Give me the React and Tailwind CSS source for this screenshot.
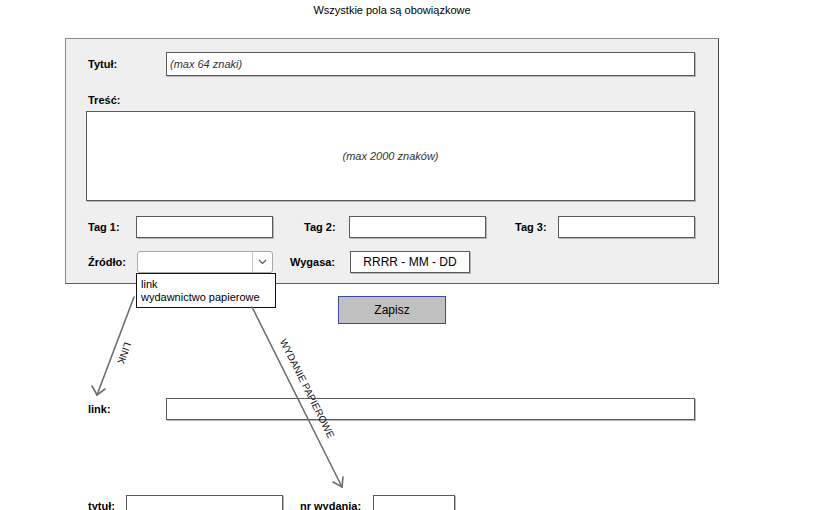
import React from 'react';

const inputCls = "h-[22px] bg-white border border-[#5a5a5a] shadow-[1px_1px_0_#b5b5b5]";

const Label = ({ children, w }) => (
  <span className={`font-bold text-[11px] text-black shrink-0 ${w}`}>{children}</span>
);

const Arrows = () => (
  <svg className="absolute inset-0 pointer-events-none" width="825" height="510" viewBox="0 0 825 510">
    <g stroke="#6e6e6e" strokeWidth="1.6" fill="none" strokeLinecap="round">
      <line x1="134" y1="297" x2="97" y2="395" />
      <polyline points="92,386 97,395 105,389" />
      <line x1="252" y1="307" x2="342" y2="487" />
      <polyline points="333,482 342,487 343,477" />
    </g>
    <text
      x="0"
      y="0"
      transform="translate(121 352) rotate(110)"
      textAnchor="middle"
      fontSize="10"
      fontFamily="'Liberation Sans', Arial, sans-serif"
      fill="#111"
    >
      LINK
    </text>
    <text
      x="0"
      y="0"
      transform="translate(304 390) rotate(63.4)"
      textAnchor="middle"
      fontSize="10"
      fontFamily="'Liberation Sans', Arial, sans-serif"
      fill="#111"
    >
      WYDANIE PAPIEROWE
    </text>
  </svg>
);

export default function App() {
  return (
    <div className="relative w-[825px] h-[510px] overflow-hidden bg-white text-black font-['Liberation_Sans',Arial,sans-serif] text-[11px]">
      <div className="ml-[65px] w-[654px] pt-[4px] h-[17px] leading-[13px] text-center">
        Wszystkie pola są obowiązkowe
      </div>

      {/* main form panel */}
      <div className="ml-[65px] mt-[21px] w-[654px] h-[246px] bg-[#efefef] border border-[#8a8a8a] border-r-[#444] border-b-[#5a5a5a]">
        <div className="flex items-center mt-[13px] pl-[22px] h-[24px]">
          <Label w="w-[78px]">Tytuł:</Label>
          <div className={`${inputCls} h-[24px] w-[529px] flex items-center pl-[3px] italic text-[#333]`}>
            (max 64 znaki)
          </div>
        </div>

        <div className="mt-[18px] pl-[22px] h-[13px] leading-[13px]">
          <Label w="">Treść:</Label>
        </div>

        <div className={`${inputCls} ml-[20px] mt-[4px] w-[609px] h-[90px] flex items-center justify-center italic text-[#333]`}>
          (max 2000 znaków)
        </div>

        <div className="flex items-center mt-[15px] pl-[22px] h-[22px]">
          <Label w="w-[48px]">Tag 1:</Label>
          <div className={`${inputCls} w-[137px]`} />
          <div className="w-[31px]" />
          <Label w="w-[45px]">Tag 2:</Label>
          <div className={`${inputCls} w-[137px]`} />
          <div className="w-[29px]" />
          <Label w="w-[43px]">Tag 3:</Label>
          <div className={`${inputCls} w-[137px]`} />
        </div>

        <div className="flex items-center mt-[13px] pl-[22px] h-[22px]">
          <Label w="w-[49px]">Źródło:</Label>
          <div className="w-[136px] h-[22px] bg-white border border-[#a9a9a9] rounded-[3px] flex justify-end">
            <div className="w-[20px] h-full border-l border-[#c8c8c8] flex items-center justify-center">
              <svg width="9" height="6" viewBox="0 0 9 6">
                <polyline points="1,1 4.5,4.5 8,1" fill="none" stroke="#555" strokeWidth="1.2" />
              </svg>
            </div>
          </div>
          <div className="w-[17px]" />
          <Label w="w-[60px]">Wygasa:</Label>
          <div className={`${inputCls} h-[21px] w-[120px] flex items-center justify-center text-[12px]`}>
            RRRR - MM - DD
          </div>
        </div>
      </div>

      <div className="ml-[338px] mt-[12px] w-[108px] h-[28px] bg-[#c0c0c0] border border-[#3a4aa0] flex items-center justify-center text-[12px]">
        Zapisz
      </div>

      <div className="flex items-center mt-[74px] pl-[88px] h-[22px]">
        <Label w="w-[78px]">link:</Label>
        <div className={`${inputCls} w-[529px]`} />
      </div>

      <div className="flex items-center mt-[75px] pl-[88px] h-[22px]">
        <Label w="w-[38px]">tytuł:</Label>
        <div className={`${inputCls} w-[157px]`} />
        <div className="w-[17px]" />
        <Label w="w-[73px]">nr wydania:</Label>
        <div className={`${inputCls} w-[82px]`} />
      </div>

      {/* open select options */}
      <div className="absolute left-[136px] top-[273px] w-[140px] h-[35px] bg-white border border-[#111] pl-[4px] pt-[4px] leading-[13px] text-[11px]">
        <div>link</div>
        <div>wydawnictwo papierowe</div>
      </div>

      <Arrows />
    </div>
  );
}
